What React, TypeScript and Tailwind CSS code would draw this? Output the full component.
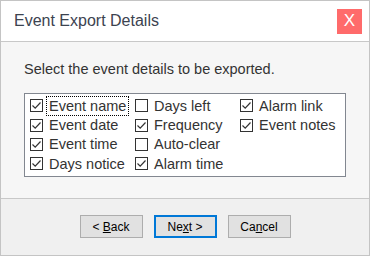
import React from "react";

interface Item {
  label: string;
  checked: boolean;
  focus?: boolean;
}

const columns: Item[][] = [
  [
    { label: "Event name", checked: true, focus: true },
    { label: "Event date", checked: true },
    { label: "Event time", checked: true },
    { label: "Days notice", checked: true },
  ],
  [
    { label: "Days left", checked: false },
    { label: "Frequency", checked: true },
    { label: "Auto-clear", checked: false },
    { label: "Alarm time", checked: true },
  ],
  [
    { label: "Alarm link", checked: true },
    { label: "Event notes", checked: true },
  ],
];

const CheckBox: React.FC<{ checked: boolean }> = ({ checked }) => (
  <span className="w-[13px] h-[13px] border border-[#333] bg-white flex items-center justify-center shrink-0">
    {checked && (
      <svg width="11" height="11" viewBox="0 0 11 11">
        <path d="M1.5 5.5 L4.2 8.2 L9.5 2.5" fill="none" stroke="#333" strokeWidth="1.2" />
      </svg>
    )}
  </span>
);

const Button: React.FC<{ children: React.ReactNode; primary?: boolean }> = ({ children, primary }) => (
  <button
    className={
      primary
        ? "w-[63px] h-[23px] bg-[#e1e1e1] border-2 border-[#0078d7] text-[12px] text-black flex items-center justify-center"
        : "w-[63px] h-[23px] bg-[#e1e1e1] border border-[#adadad] text-[12px] text-black flex items-center justify-center"
    }
  >
    <span className="whitespace-pre">{children}</span>
  </button>
);

const App: React.FC = () => {
  return (
    <div className="w-[371px] h-[257px] bg-white" style={{ fontFamily: '"Liberation Sans", Arial, sans-serif' }}>
      <div className="w-[370px] h-[256px] border border-[#c4c4c4] flex flex-col">
        <div className="h-[41px] bg-white border-b border-[#c8c8c8] flex items-center justify-between pl-[13px] pr-[7px] shrink-0">
          <span className="text-[16px] text-[#3c4350]">Event Export Details</span>
          <span className="w-[25px] h-[25px] bg-[#ff6b6b] text-white text-[17px] flex items-center justify-center">X</span>
        </div>
        <div className="flex-1 bg-[#f6f6f6] pt-[19px] px-[23px]">
          <p className="text-[14.5px] text-[#333] leading-[17px]">Select the event details to be exported.</p>
          <div className="mt-[15px] w-[322px] h-[84px] border border-[#828790] bg-white flex pl-[5px] pt-[2px]">
            {columns.map((col, i) => (
              <div key={i} className="w-[106px] flex flex-col">
                {col.map((it) => (
                  <div key={it.label} className="h-[19.4px] flex items-center gap-[4px]">
                    <CheckBox checked={it.checked} />
                    <span
                      className={
                        it.focus
                          ? "text-[14.5px] text-[#333] leading-[18px] px-[2px] outline outline-1 outline-dotted outline-black"
                          : "text-[14.5px] text-[#333] leading-[18px] px-[2px]"
                      }
                    >
                      {it.label}
                    </span>
                  </div>
                ))}
              </div>
            ))}
          </div>
        </div>
        <div className="h-[57px] bg-[#f0f0f0] border-t border-[#c8c8c8] flex justify-center gap-[11px] pt-[16px] shrink-0">
          <Button>
            {"< "}
            <u>B</u>ack
          </Button>
          <Button primary>
            Ne<u>x</u>
            {"t >"}
          </Button>
          <Button>
            Ca<u>n</u>cel
          </Button>
        </div>
      </div>
    </div>
  );
};

export default App;
